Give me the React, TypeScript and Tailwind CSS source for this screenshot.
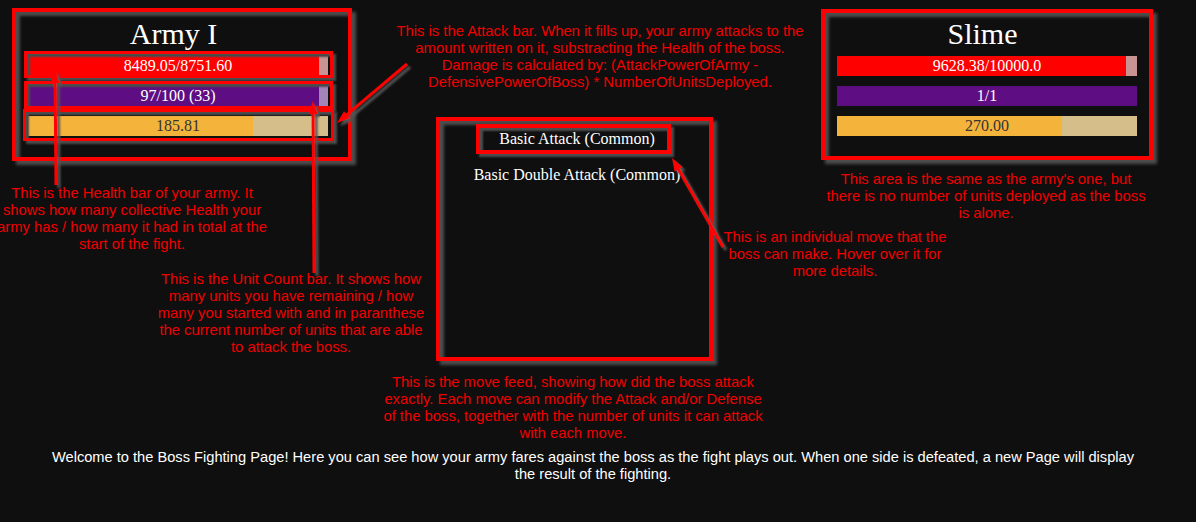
import React from "react";

type BarProps = { value: number; max: number; label: string; fill: string; rest: string; text: string };

function Bar({ value, max, label, fill, rest, text }: BarProps) {
  const pct = Math.max(0, Math.min(1, value / max)) * 100;
  return (
    <div className={`relative h-[20px] w-[300px] ${rest}`}>
      <div className={`h-full ${fill}`} style={{ width: `${pct}%` }} />
      <div className={`absolute inset-0 flex items-center justify-center text-[16px] leading-[20px] ${text}`}>{label}</div>
    </div>
  );
}

function Arrow({ x1, y1, x2, y2 }: { x1: number; y1: number; x2: number; y2: number }) {
  const dx = x2 - x1;
  const dy = y2 - y1;
  const len = Math.hypot(dx, dy);
  const ux = dx / len;
  const uy = dy / len;
  const hl = 13;
  const hw = 4.5;
  const bx = x2 - ux * hl;
  const by = y2 - uy * hl;
  const px = -uy;
  const py = ux;
  const pts = `${x2},${y2} ${bx + px * hw},${by + py * hw} ${bx - px * hw},${by - py * hw}`;
  return (
    <g filter="url(#sh)">
      <line x1={x1} y1={y1} x2={bx + ux * 2} y2={by + uy * 2} stroke="#ff0000" strokeWidth={3} />
      <polygon points={pts} fill="#ff0000" />
    </g>
  );
}

const redText = "absolute text-center whitespace-nowrap text-[14.8px] leading-[17px] text-[#f00000]";
const boxShadow = "shadow-[4px_4px_3px_#4d4d4d,inset_4px_4px_3px_#4d4d4d]";
const rectShadow = "shadow-[3px_3px_2px_#4d4d4d,inset_3px_3px_2px_#4d4d4d]";

export default function App() {
  return (
    <div
      className="relative h-[522px] w-[1196px] overflow-hidden bg-[#0f0f0f]"
      style={{ fontFamily: '"Liberation Sans", Arial, sans-serif' }}
    >
      {/* Page content */}
      <div className="flex items-start">
        {/* Army box */}
        <div
          className={`ml-[12px] mt-[8px] h-[153px] w-[340px] border-4 border-[#ff0000] ${boxShadow} pl-[12px] pt-[5px]`}
          style={{ fontFamily: '"Liberation Serif", "Times New Roman", serif' }}
        >
          <div className="w-[300px] pr-[9px] text-center text-[30px] leading-[34px] text-white">Army I</div>
          <div className="mt-[5px] flex flex-col gap-[10px]">
            <Bar value={8489.05} max={8751.6} label="8489.05/8751.60" fill="bg-[#ff0000]" rest="bg-[#c89393]" text="text-white" />
            <Bar value={97} max={100} label="97/100 (33)" fill="bg-[#5e0e82]" rest="bg-[#a284b9]" text="text-white" />
            <Bar value={185.81} max={247.75} label="185.81" fill="bg-[#f4b43b]" rest="bg-[#d6be8a]" text="text-[#333333]" />
          </div>
        </div>

        {/* Move feed */}
        <div
          className={`ml-[84px] mt-[117px] flex h-[244px] w-[277px] flex-col items-center gap-[16px] border-4 border-[#ff0000] ${boxShadow} pl-[5px] pt-[8px]`}
          style={{ fontFamily: '"Liberation Serif", "Times New Roman", serif' }}
        >
          <div className="text-[16px] leading-[20px] text-white">Basic Attack (Common)</div>
          <div className="text-[16px] leading-[20px] text-white">Basic Double Attack (Common)</div>
        </div>

        {/* Slime box */}
        <div
          className={`ml-[108px] mt-[9px] h-[151px] w-[332px] border-4 border-[#ff0000] ${boxShadow} pl-[12px] pt-[4px]`}
          style={{ fontFamily: '"Liberation Serif", "Times New Roman", serif' }}
        >
          <div className="w-[300px] pr-[9px] text-center text-[30px] leading-[34px] text-white">Slime</div>
          <div className="mt-[5px] flex flex-col gap-[10px]">
            <Bar value={9628.38} max={10000} label="9628.38/10000.0" fill="bg-[#ff0000]" rest="bg-[#c89393]" text="text-white" />
            <Bar value={1} max={1} label="1/1" fill="bg-[#5e0e82]" rest="bg-[#a284b9]" text="text-white" />
            <Bar value={270} max={360} label="270.00" fill="bg-[#f4b43b]" rest="bg-[#d6be8a]" text="text-[#333333]" />
          </div>
        </div>
      </div>

      <p className="mt-[88px] whitespace-nowrap pr-[10px] text-center text-[14.65px] leading-[17px] text-white">
        Welcome to the Boss Fighting Page! Here you can see how your army fares against the boss as the fight plays out. When one side is defeated, a new Page will display
        <br />
        the result of the fighting.
      </p>

      {/* Annotation rectangles */}
      <div className={`absolute left-[24px] top-[51px] h-[27px] w-[309px] border-[3px] border-[#ff0000] ${rectShadow}`} />
      <div className={`absolute left-[24px] top-[81px] h-[28px] w-[309px] border-[3px] border-[#ff0000] ${rectShadow}`} />
      <div className={`absolute left-[23px] top-[109px] h-[32px] w-[311px] border-[3px] border-[#ff0000] ${rectShadow}`} />
      <div className={`absolute left-[476px] top-[124px] h-[30px] w-[195px] border-4 border-[#ff0000] ${rectShadow}`} />

      {/* Arrows */}
      <svg className="pointer-events-none absolute inset-0" width={1196} height={522}>
        <defs>
          <filter id="sh" x="-20%" y="-20%" width="140%" height="140%">
            <feDropShadow dx="3" dy="3" stdDeviation="1" floodColor="#555555" floodOpacity="1" />
          </filter>
        </defs>
        <Arrow x1={56} y1={185} x2={55} y2={70} />
        <Arrow x1={314} y1={273} x2={313} y2={101} />
        <Arrow x1={407} y1={64} x2={337} y2={123} />
        <Arrow x1={723} y1={247} x2={672} y2={158} />
      </svg>

      {/* Annotation texts */}
      <div className={`${redText} left-[380px] top-[23px] w-[440px]`}>
        This is the Attack bar. When it fills up, your army attacks to the
        <br />
        amount written on it, substracting the Health of the boss.
        <br />
        Damage is calculated by: (AttackPowerOfArmy -
        <br />
        DefensivePowerOfBoss) * NumberOfUnitsDeployed.
      </div>

      <div className={`${redText} left-[-18px] top-[185px] w-[300px]`}>
        This is the Health bar of your army. It
        <br />
        shows how many collective Health your
        <br />
        army has / how many it had in total at the
        <br />
        start of the fight.
      </div>

      <div className={`${redText} left-[141px] top-[271px] w-[300px]`}>
        This is the Unit Count bar. It shows how
        <br />
        many units you have remaining / how
        <br />
        many you started with and in paranthese
        <br />
        the current number of units that are able
        <br />
        to attack the boss.
      </div>

      <div className={`${redText} left-[816px] top-[171px] w-[340px]`}>
        This area is the same as the army's one, but
        <br />
        there is no number of units deployed as the boss
        <br />
        is alone.
      </div>

      <div className={`${redText} left-[705px] top-[229px] w-[260px]`}>
        This is an individual move that the
        <br />
        boss can make. Hover over it for
        <br />
        more details.
      </div>

      <div className={`${redText} left-[353px] top-[374px] w-[440px]`}>
        This is the move feed, showing how did the boss attack
        <br />
        exactly. Each move can modify the Attack and/or Defense
        <br />
        of the boss, together with the number of units it can attack
        <br />
        with each move.
      </div>
    </div>
  );
}
